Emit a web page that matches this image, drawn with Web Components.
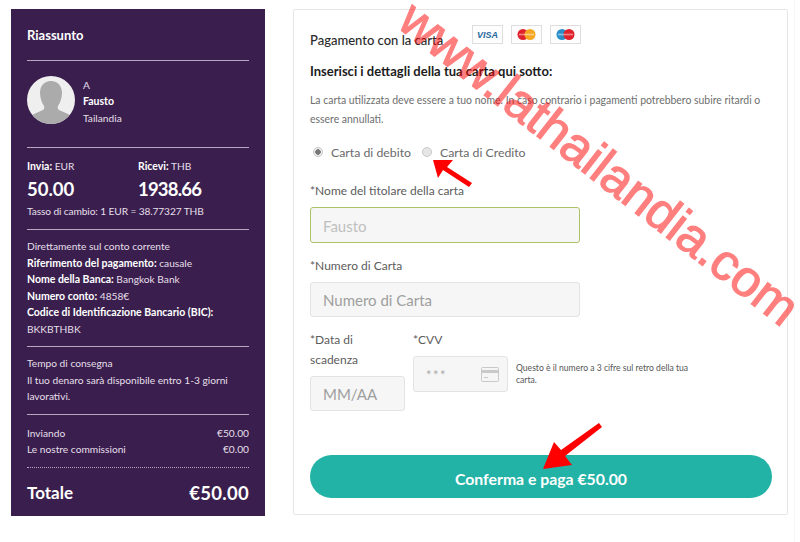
<!DOCTYPE html>
<html lang="it">
<head>
<meta charset="utf-8">
<title>Pagamento</title>
<style>
  html, body { margin: 0; padding: 0; background: #fff; }
  body { width: 800px; height: 542px; overflow: hidden; position: relative; font-family: "Lato", "Liberation Sans", sans-serif; background: linear-gradient(to right, #fff 794px, #f6f6f6 794px, #f6f6f6 795px, #fff 795px); }
</style>
</head>
<body>
<pay-page>
  <summary-panel></summary-panel>
  <card-form></card-form>
</pay-page>
<page-overlay></page-overlay>

<script>
class PayPage extends HTMLElement {
  constructor() {
    super();
    this.attachShadow({ mode: "open" });
    this.shadowRoot.innerHTML = `
      <style>
        :host { display: flex; gap: 28px; align-items: flex-start; padding: 9px 12px 0 11px; }
      </style>
      <slot></slot>
    `;
  }
}

class SummaryPanel extends HTMLElement {
  constructor() {
    super();
    this.attachShadow({ mode: "open" });
    this.shadowRoot.innerHTML = `
      <style>
        :host { display: block; width: 222px; height: 507px; flex: none; box-sizing: content-box; padding: 0 16px; background: #3a1f4e; color: #e6dfe9; font-size: 10.2px; line-height: 16.5px; }
        b { color: #fff; font-weight: 700; font-size: 10.5px; }
        .sec { border-bottom: 1px solid #b6a6bf; box-sizing: border-box; }
        .title { height: 52px; padding-top: 18px; font-size: 13px; font-weight: 700; color: #fff; }
        .who { height: 87px; display: flex; gap: 8px; align-items: center; padding-bottom: 8px; box-sizing: border-box; }
        .who svg { flex: none; }
        .who div { padding-top: 3px; }
        .rate { height: 82px; padding-top: 10px; }
        .cols { display: grid; grid-template-columns: 111px 1fr; }
        .big { font-size: 18.5px; font-weight: 700; color: #fff; line-height: 28px; }
        .tight { letter-spacing: -.8px; }
        .fx { letter-spacing: -.12px; }
        .bank { height: 117px; padding-top: 8px; }
        .time { height: 68px; padding-top: 8px; }
        .fees { height: 53px; padding-top: 10px; line-height: 16px; border-bottom: 1px dotted #b6a6bf; }
        .row { display: flex; justify-content: space-between; }
        .total { font-size: 17px; font-weight: 700; color: #fff; padding-top: 17px; }
        .total span + span { font-size: 18.5px; letter-spacing: .3px; }
      </style>
      <div class="sec title">Riassunto</div>
      <div class="sec who">
        <svg width="48" height="48" viewBox="0 0 48 48">
          <defs><clipPath id="av"><circle cx="24" cy="24" r="24"/></clipPath></defs>
          <circle cx="24" cy="24" r="24" fill="#efefef"/>
          <path clip-path="url(#av)" fill="#ababab" d="M24 5c7 0 11 5 11 12 0 5-2 10-4 13-.6 1.500-.2 3 1 4l9 4c2 1 3 3 4 10H3c1-7 2-9 4-10l9-4c1.200-1 1.600-2.500 1-4-2-3-4-8-4-13 0-7 4-12 11-12z"/>
        </svg>
        <div>A<br><b>Fausto</b><br>Tailandia</div>
      </div>
      <div class="sec rate">
        <div class="cols">
          <div><b>Invia:</b> EUR</div><div><b>Ricevi:</b> THB</div>
          <div class="big">50.00</div><div class="big tight">1938.66</div>
        </div>
        <div class="fx">Tasso di cambio: 1 EUR = 38.77327 THB</div>
      </div>
      <div class="sec bank">
        Direttamente sul conto corrente<br>
        <b>Riferimento del pagamento:</b> causale<br>
        <b>Nome della Banca:</b> Bangkok Bank<br>
        <b>Numero conto:</b> 4858€<br>
        <b>Codice di Identificazione Bancario (BIC):</b><br>
        BKKBTHBK
      </div>
      <div class="sec time">
        Tempo di consegna<br>
        Il tuo denaro sarà disponibile entro 1-3 giorni lavorativi.
      </div>
      <div class="sec fees">
        <div class="row"><span>Inviando</span><span>€50.00</span></div>
        <div class="row"><span>Le nostre commissioni</span><span>€0.00</span></div>
      </div>
      <div class="row total"><span>Totale</span><span>€50.00</span></div>
    `;
  }
}

class CardLogo extends HTMLElement {
  constructor() {
    super();
    this.attachShadow({ mode: "open" });
    const kind = this.getAttribute("kind");
    let art = `<text x="15.500" y="12.500" text-anchor="middle" font-family="Liberation Sans" font-size="9" font-weight="700" font-style="italic" fill="#2a6a9e">VISA</text>`;
    if (kind === "mc") art = `<circle cx="12" cy="9.500" r="5.500" fill="#e0222c"/><circle cx="19" cy="9.500" r="5.500" fill="#f5a623"/><rect x="8" y="8.700" width="15" height="1.600" fill="#fff" opacity=".45"/>`;
    if (kind === "maestro") art = `<circle cx="12" cy="9.500" r="5.500" fill="#2a8fc9"/><circle cx="19" cy="9.500" r="5.500" fill="#e0222c"/><rect x="8" y="8.700" width="15" height="1.600" fill="#fff" opacity=".45"/>`;
    this.shadowRoot.innerHTML = `
      <style>:host { display: block; width: 29px; height: 17px; border: 1px solid #dedede; background: #fdfdfd; }
      svg { display: block; }</style>
      <svg width="29" height="17" viewBox="1 1 29 17">${art}</svg>
    `;
  }
}

class FormField extends HTMLElement {
  constructor() {
    super();
    this.attachShadow({ mode: "open" });
    this.shadowRoot.innerHTML = `
      <style>
        :host { display: block; }
        label { display: block; font-size: 12px; line-height: 20px; color: #5c5c5c; }
        .box { display: flex; align-items: center; justify-content: space-between; box-sizing: border-box; margin-top: 6px; height: var(--h, 35px); padding: 1px var(--pr, 12px) 0 12px; background: #f6f6f6; border: 1px solid #e3e3e3; border-radius: 3px; font-size: 15px; color: #9e9e9e; }
        :host([active]) .box { border-color: #adc264; color: #c0c0c0; }
      </style>
      <label><slot name="label"></slot></label>
      <div class="box"><slot></slot></div>
    `;
  }
}

class RadioChoice extends HTMLElement {
  constructor() {
    super();
    this.attachShadow({ mode: "open" });
    this.shadowRoot.innerHTML = `
      <style>
        :host { display: flex; align-items: center; gap: 8px; font-size: 12.3px; color: #6a6a6a; }
        i { width: 10px; height: 10px; border-radius: 50%; box-sizing: border-box; border: 1px solid #c8c8c8; background: #e6e6e6; }
        :host([checked]) i { background: radial-gradient(circle, #777 0 2.500px, #eee 3px); }
      </style>
      <i></i><slot></slot>
    `;
  }
}

class CardForm extends HTMLElement {
  constructor() {
    super();
    this.attachShadow({ mode: "open" });
    this.shadowRoot.innerHTML = `
      <style>
        :host { display: block; width: 495px; height: 506px; flex: none; box-sizing: border-box; padding: 15px 15px 0 16px; border: 1px solid #e6e6e6; border-radius: 2px; background: #fff; color: #222; }
        .head { display: flex; align-items: flex-end; height: 24px; }
        .head h2 { margin: 0; width: 162px; flex: none; font-size: 13px; font-weight: 500; line-height: 18px; color: #2a2a2a; }
        .logos { display: flex; gap: 8px; align-self: flex-start; }
        h3 { margin: 12px 0 0; font-size: 13px; font-weight: 700; line-height: 20px; color: #1c1c1c; }
        p { margin: 10px 0 0; width: 460px; font-size: 10.450px; line-height: 19px; color: #6e6e6e; }
        .radios { display: flex; gap: 11px; margin: 13px 0 0 3px; height: 20px; align-items: center; }
        .wide { width: 270px; }
        .name { margin-top: 19px; --h: 36px; }
        .num { margin-top: 13px; }
        .bottom { display: flex; align-items: flex-start; margin-top: 13px; }
        .date { width: 95px; margin-right: 8px; }
        .cvv { width: 95px; margin-right: 8px; --h: 36px; --pr: 8px; }
        .hint { width: 180px; margin-top: 32px; font-size: 8.600px; line-height: 12px; color: #555; }
        .stars { font-size: 13px; letter-spacing: 1.500px; color: #aaa; }
        button { display: block; width: 462px; height: 43px; margin-top: 44px; padding: 3px 0 0; border: 0; border-radius: 22px; background: #22b3a6; color: #fff; font: 700 15.800px "Lato", "Liberation Sans", sans-serif; }
      </style>
      <div class="head">
        <h2>Pagamento con la carta</h2>
        <div class="logos"><card-logo kind="visa"></card-logo><card-logo kind="mc"></card-logo><card-logo kind="maestro"></card-logo></div>
      </div>
      <h3>Inserisci i dettagli della tua carta qui sotto:</h3>
      <p>La carta utilizzata deve essere a tuo nome. In caso contrario i pagamenti potrebbero subire ritardi o essere annullati.</p>
      <div class="radios">
        <radio-choice checked>Carta di debito</radio-choice>
        <radio-choice>Carta di Credito</radio-choice>
      </div>
      <form-field class="wide name" active><span slot="label">*Nome del titolare della carta</span>Fausto</form-field>
      <form-field class="wide num"><span slot="label">*Numero di Carta</span>Numero di Carta</form-field>
      <div class="bottom">
        <form-field class="date"><span slot="label">*Data di<br>scadenza</span>MM/AA</form-field>
        <form-field class="cvv"><span slot="label">*CVV</span><span class="stars">***</span>
          <svg width="18" height="15" viewBox="0 0 18 15"><rect x=".5" y=".5" width="17" height="14" rx="1" fill="#f5f5f5" stroke="#c9c9c9"/><rect x="1" y="3" width="16" height="3" fill="#c9c9c9"/><rect x="3" y="10" width="4" height="1" fill="#c9c9c9"/></svg>
        </form-field>
        <div class="hint">Questo è il numero a 3 cifre sul retro della tua carta.</div>
      </div>
      <button>Conferma e paga €50.00</button>
    `;
  }
}

class PageOverlay extends HTMLElement {
  constructor() {
    super();
    this.attachShadow({ mode: "open" });
    this.shadowRoot.innerHTML = `
      <style>
        :host { position: absolute; inset: 0; pointer-events: none; overflow: hidden; }
        .mark { position: absolute; left: 422px; top: -8px; transform-origin: 0 0; transform: rotate(38deg); white-space: nowrap; font: 51px/1 "Liberation Sans", Arial, sans-serif; color: #f00; -webkit-text-stroke: 1.2px #f00; opacity: .5; }
        svg { position: absolute; left: 0; top: 0; }
      </style>
      <div class="mark">www.lathailandia.com</div>
      <svg width="800" height="542" viewBox="0 0 800 542">
        <path fill="#f00" d="M433 160l20 0-6 7 25 16-3 4-26-17-5 8z"/>
        <path fill="#f00" d="M543 469l11-27 7 8 38-27 3 4-37 29 7 9z"/>
      </svg>
    `;
  }
}

customElements.define("pay-page", PayPage);
customElements.define("summary-panel", SummaryPanel);
customElements.define("card-logo", CardLogo);
customElements.define("form-field", FormField);
customElements.define("radio-choice", RadioChoice);
customElements.define("card-form", CardForm);
customElements.define("page-overlay", PageOverlay);
</script>
</body>
</html>
